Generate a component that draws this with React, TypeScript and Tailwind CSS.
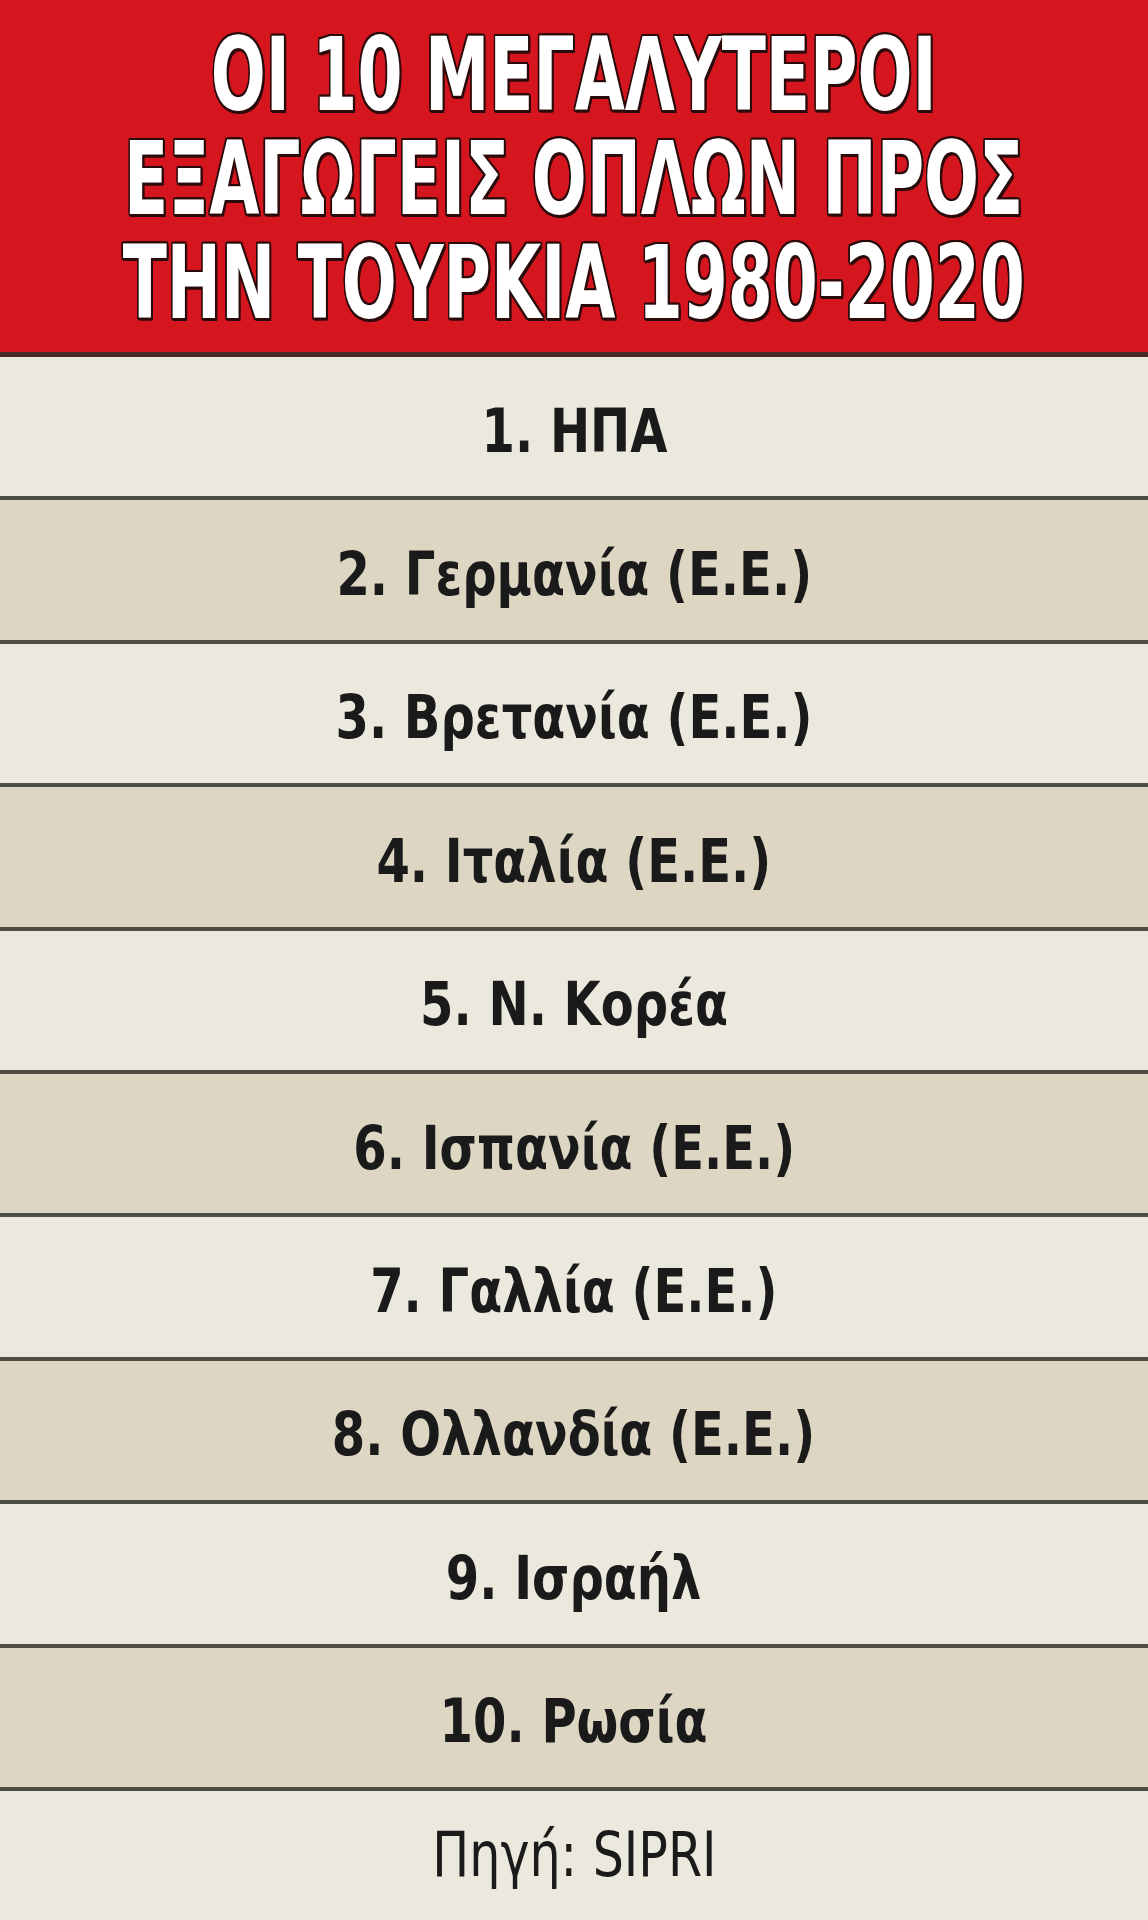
import React from 'react';

const rows = [
  '1. ΗΠΑ',
  '2. Γερμανία (Ε.Ε.)',
  '3. Βρετανία (Ε.Ε.)',
  '4. Ιταλία (Ε.Ε.)',
  '5. Ν. Κορέα',
  '6. Ισπανία (Ε.Ε.)',
  '7. Γαλλία (Ε.Ε.)',
  '8. Ολλανδία (Ε.Ε.)',
  '9. Ισραήλ',
  '10. Ρωσία',
];

const titleLines = ['ΟΙ 10 ΜΕΓΑΛΥΤΕΡΟΙ', 'ΕΞΑΓΩΓΕΙΣ ΟΠΛΩΝ ΠΡΟΣ', 'ΤΗΝ ΤΟΥΡΚΙΑ 1980-2020'];

export default function App() {
  return (
    <div className="w-[1148px] h-[1920px] overflow-hidden bg-[#ebe9de] font-['DejaVu_Sans_Condensed','DejaVu_Sans',sans-serif]">
      <div className="h-[357px] bg-[#d6161e] border-b-[5px] border-[#4a2a24] flex flex-col items-center justify-center pt-[6px]">
        {titleLines.map(line => (
          <div
            key={line}
            className="h-[104px] flex items-center text-white font-bold text-[102px] leading-[1] scale-x-[0.705] [text-shadow:3px_3px_0_#2a0a0a,-2px_-2px_0_#2a0a0a,2px_-2px_0_#2a0a0a,-2px_2px_0_#2a0a0a,0_3px_0_#2a0a0a,3px_0_0_#2a0a0a,-2px_0_0_#2a0a0a,0_-2px_0_#2a0a0a] whitespace-nowrap"
          >
            {line}
          </div>
        ))}
      </div>
      {rows.map((r, i) => (
        <div
          key={r}
          className={`h-[143.4px] border-b-4 border-[#4d4d46] flex items-center justify-center ${i % 2 === 0 ? 'bg-[#ebe9de]' : 'bg-[#ddd6c3]'}`}
        >
          <span className="font-bold text-[60px] leading-none text-[#1a1a1a] pt-[8px] scale-x-[0.89] whitespace-nowrap">{r}</span>
        </div>
      ))}
      <div className="h-[128px] flex items-center justify-center bg-[#ebe9de]">
        <span className="text-[62px] leading-none text-[#1a1a1a] scale-x-[0.88] whitespace-nowrap">Πηγή: SIPRI</span>
      </div>
    </div>
  );
}
